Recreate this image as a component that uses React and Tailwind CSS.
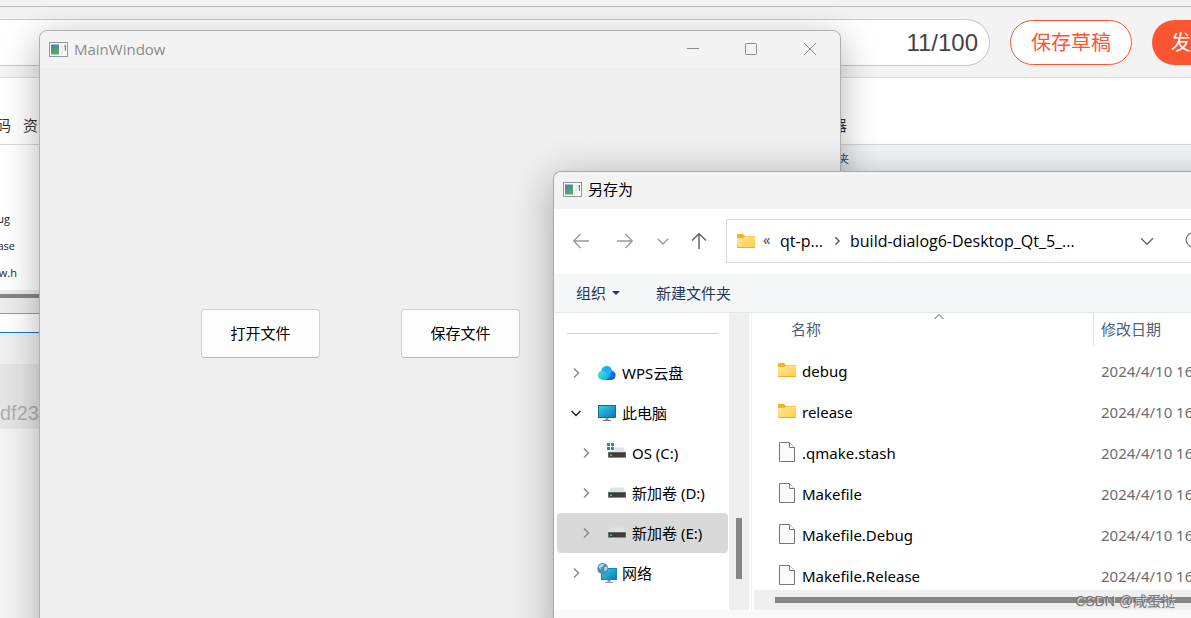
import React from "react";

const uiFont = "font-['Open_Sans','Noto_Sans_CJK_SC',sans-serif]";
const listFont = "font-['Noto_Sans','Noto_Sans_CJK_SC',sans-serif]";

function AppIcon() {
  return (
    <svg width="20" height="16" viewBox="0 0 20 16" aria-hidden="true">
      <defs>
        <linearGradient id="appPane" x1="0" y1="0" x2="0.4" y2="1">
          <stop offset="0" stopColor="#4a7fa5" />
          <stop offset="1" stopColor="#5aa86c" />
        </linearGradient>
      </defs>
      <rect x="0.5" y="0.5" width="18" height="14" fill="#fafafa" stroke="#92979e" />
      <rect x="2" y="2.500" width="8" height="10" fill="url(#appPane)" />
      <rect x="11.500" y="3" width="3" height="9" fill="#ededed" />
      <path d="M15.500 3h1.500v6h-1z" fill="url(#appPane)" />
    </svg>
  );
}

function Folder() {
  return (
    <svg width="18" height="16" viewBox="0 0 18 16" aria-hidden="true" className="shrink-0">
      <defs>
        <linearGradient id="folderFace" x1="0" y1="0" x2="1" y2="1">
          <stop offset="0" stopColor="#ffe8a4" />
          <stop offset="1" stopColor="#ffcb3d" />
        </linearGradient>
      </defs>
      <path d="M0 1.500Q0 1 .5 1H6l2 2h10v4H0z" fill="#f8b31c" />
      <path d="M0 5h6.500l1.500-1.500H18V15H0z" fill="url(#folderFace)" />
      <path d="M0 14.500h18" stroke="#efae25" />
    </svg>
  );
}

function FileIcon() {
  return (
    <svg width="18" height="20" viewBox="0 0 18 20" aria-hidden="true" className="shrink-0">
      <path d="M1.500.5H11.500L16.500 5.500V19.500H1.500z" fill="#fafafa" stroke="#767676" />
      <path d="M11.500.5V5.500H16.500" fill="#fff" stroke="#767676" />
    </svg>
  );
}

function Chevron({ dir, color, size = 12, width = 1.5 }) {
  const paths = {
    right: "M4 1.500L8.500 6L4 10.500",
    down: "M1.500 4L6 8.500L10.500 4",
    up: "M1.500 8L6 3.500L10.500 8",
  };
  return (
    <svg width={size} height={size} viewBox="0 0 12 12" fill="none" stroke={color} strokeWidth={width} aria-hidden="true" className="shrink-0">
      <path d={paths[dir]} />
    </svg>
  );
}

function Cloud() {
  return (
    <svg width="20" height="20" viewBox="0 0 20 20" aria-hidden="true">
      <defs>
        <linearGradient id="cloudBack" x1="0" y1="0" x2="1" y2="1">
          <stop offset="0" stopColor="#1fb8ff" />
          <stop offset="1" stopColor="#0a4fd8" />
        </linearGradient>
        <linearGradient id="cloudFront" x1="0" y1="0" x2="1" y2="0.6">
          <stop offset="0" stopColor="#4be8b8" />
          <stop offset="1" stopColor="#12b6f4" />
        </linearGradient>
      </defs>
      <path d="M4.500 8a5.200 5.200 0 0 1 10.300-.6A4.900 4.900 0 0 1 14.500 17H6z" fill="url(#cloudBack)" />
      <path d="M5.500 17A4.800 4.800 0 1 1 9 8.800L13 13 9 17z" fill="url(#cloudFront)" />
      <path d="M4.600 7.600A5.200 5.200 0 0 1 14.800 7.400L13 12.500 9 8.800Q7 7 4.600 7.600z" fill="#20aefb" />
    </svg>
  );
}

function Monitor() {
  return (
    <svg width="20" height="20" viewBox="0 0 20 20" aria-hidden="true">
      <defs>
        <linearGradient id="screen" x1="0" y1="0" x2="1" y2="1">
          <stop offset="0" stopColor="#36d6e6" />
          <stop offset="1" stopColor="#0a72bd" />
        </linearGradient>
      </defs>
      <rect x="1.500" y="2.500" width="17" height="12" fill="url(#screen)" stroke="#176a8c" />
      <path d="M8.500 15h3v2h-3z" fill="#8c979e" />
      <path d="M6 17.500h8" stroke="#6c767d" />
    </svg>
  );
}

function Drive({ system }) {
  return (
    <svg width="20" height="20" viewBox="0 0 20 20" aria-hidden="true">
      <path d="M4 4.500h12L19 9.500H1z" fill="#dfe1e4" />
      <rect x="1" y="9" width="18" height="6" fill="#8d8d8d" />
      <rect x="1.500" y="9.500" width="17" height="4.500" fill="#3c3c3c" />
      <rect x="3" y="11.500" width="2" height="1.500" fill="#27e03f" />
      {system && (
        <g>
          <path d="M0 0h8v7.500H0z" fill="#fff" />
          <path d="M0 0h3v3H0zM4 0h3v3H4zM0 4h3v3H0zM4 4h3v3H4z" fill="#168bd8" />
        </g>
      )}
    </svg>
  );
}

function Network() {
  return (
    <svg width="20" height="20" viewBox="0 0 20 20" aria-hidden="true">
      <rect x="4.500" y="5.500" width="15" height="11" fill="url(#screen)" stroke="#1788b4" />
      <path d="M10.500 17h3v2h-3z" fill="#8c979e" />
      <path d="M8 19.500h8" stroke="#98a1a7" />
      <circle cx="5.800" cy="5.500" r="5.500" fill="#4d8fb5" />
      <path d="M1.500 4Q3 .5 7 1L6 3.500 3.500 4.500 4 7zM7.500 4l3-.5-.5 3-2.500 2z" fill="#b3dcea" />
    </svg>
  );
}

const tree = [
  { label: "WPS云盘", icon: <Cloud />, depth: 0 },
  { label: "此电脑", icon: <Monitor />, depth: 0, open: true },
  { label: "OS (C:)", icon: <Drive system />, depth: 1 },
  { label: "新加卷 (D:)", icon: <Drive />, depth: 1 },
  { label: "新加卷 (E:)", icon: <Drive />, depth: 1, selected: true },
  { label: "网络", icon: <Network />, depth: 0 },
];

const files = [
  { name: "debug", folder: true },
  { name: "release", folder: true },
  { name: ".qmake.stash" },
  { name: "Makefile" },
  { name: "Makefile.Debug" },
  { name: "Makefile.Release" },
];

function EditorPage() {
  return (
    <div className="flex h-full flex-col whitespace-nowrap">
      <div className="h-[7px] shrink-0 border-b border-[#b8b8b8]" />
      <header className="flex h-[71px] shrink-0 items-start border-b border-[#dcdcdc] pt-3">
        <label className="flex h-[47px] w-[990px] shrink-0 items-center rounded-r-full border border-l-0 border-[#c8c8c8] bg-white pr-[11px]">
          <input aria-label="标题" className="h-full min-w-0 flex-1 bg-transparent outline-none" />
          <span className="font-['Liberation_Sans',sans-serif] text-2xl text-[#444444]">11/100</span>
        </label>
        <button className="ml-5 mt-px h-[45px] w-[122px] shrink-0 rounded-full border border-[#fc5531] bg-white text-xl text-[#fc5531]">保存草稿</button>
        <button className="ml-5 mt-px h-[45px] w-32 shrink-0 rounded-full bg-[#fc5531] pl-[19px] text-left text-xl text-white">发布文章</button>
      </header>
      <nav className="flex h-[67px] shrink-0 items-end border-b border-[#d8d8d8] bg-white pb-2 text-[15px] text-[#333333]">
        <span className="flex w-[11px] shrink-0 justify-end overflow-hidden">代码</span>
        <span className="ml-3 w-[817px] shrink-0">资源</span>
        <span className="-ml-2">器</span>
      </nav>
      <div className="flex min-h-0 flex-1">
        <aside className="flex w-[600px] shrink-0 flex-col text-[11px] text-[#222222]">
          <div className="h-[145px] shrink-0 bg-white pt-[60px] leading-[27px]">
            <div className="flex w-[10px] justify-end">debug</div>
            <div className="flex w-[15px] justify-end">release</div>
            <div className="flex w-[17px] justify-end">mainwindow.h</div>
          </div>
          <div className="flex h-[23px] shrink-0 items-start bg-[#ececec] pt-1">
            <div className="h-1 w-full bg-[#858585]" />
          </div>
          <div className="h-5 shrink-0 border-b border-t border-b-[#1278cc] border-t-[#68a8d8] bg-white" />
          <div className="h-[31px] shrink-0 bg-[#efefef]" />
          <div className="flex h-[65px] shrink-0 items-end bg-[#e5e5e5] pb-[2px] font-['Liberation_Sans',sans-serif] text-xl text-[#b3adad]">df23c</div>
        </aside>
        <div className="flex-1 bg-[#f2f4f6] pt-[6px]">
          <div className="flex w-[249px] justify-end text-[11px] text-[#314e78]">新建文件夹</div>
        </div>
      </div>
    </div>
  );
}

function MainWindow() {
  return (
    <section className="absolute left-[39px] top-[30px] h-[640px] w-[802px] rounded-lg border border-[#b0b0b0] bg-[#efefef] shadow-[0_8px_36px_rgba(0,0,0,0.3)]">
      <header className="flex h-[37px] items-center rounded-t-lg bg-[#f3f3f3] pl-[9px] text-[#8b8b8b]">
        <AppIcon />
        <h1 className="ml-[5px] text-[15px]">MainWindow</h1>
        <div className="ml-auto flex h-full pb-px">
          <button aria-label="最小化" className="flex w-[58px] items-center justify-center">
            <svg width="14" height="14" fill="none" stroke="currentColor"><path d="M1 6.500h12" /></svg>
          </button>
          <button aria-label="最大化" className="flex w-[58px] items-center justify-center">
            <svg width="14" height="14" fill="none" stroke="currentColor"><rect x="1.500" y="1.500" width="11" height="11" rx="1" /></svg>
          </button>
          <button aria-label="关闭" className="flex w-[60px] items-center justify-center">
            <svg width="14" height="14" fill="none" stroke="currentColor"><path d="M1 1l12 12M13 1L1 13" /></svg>
          </button>
        </div>
      </header>
      <div className="flex gap-[81px] pl-[161px] pt-[241px] text-[15px] text-black">
        <button className="h-[49px] w-[119px] rounded border border-[#d0d0d0] border-b-[#b8b8b8] bg-[#fdfdfd]">打开文件</button>
        <button className="h-[49px] w-[119px] rounded border border-[#d0d0d0] border-b-[#b8b8b8] bg-[#fdfdfd]">保存文件</button>
      </div>
    </section>
  );
}

function NavButton({ label, color, children }) {
  return (
    <button aria-label={label} className="shrink-0">
      <svg width="18" height="18" viewBox="0 0 18 18" fill="none" stroke={color} strokeWidth="1.400">{children}</svg>
    </button>
  );
}

function SaveDialog() {
  return (
    <section className="absolute -right-16 left-[553px] top-[171px] flex h-[480px] flex-col overflow-visible whitespace-nowrap rounded-tl-lg border-l border-t border-[#a8a8a8] bg-white text-[15px] text-black shadow-[0_8px_42px_rgba(0,0,0,0.32)]">
      <header className="flex h-[37px] shrink-0 items-center rounded-tl-lg bg-[#f3f3f3] pb-[2px] pl-[9px]">
        <AppIcon />
        <h2 className="ml-[5px]">另存为</h2>
      </header>
      <div className="flex h-[65px] shrink-0 items-center pb-[2px] pl-[18px]">
        <NavButton label="后退" color="#9a9a9a"><path d="M17 9H2M8.500 2L1.700 9l6.800 7" /></NavButton>
        <div className="ml-[26px] flex"><NavButton label="前进" color="#9a9a9a"><path d="M1 9h15M9.500 2l6.800 7-6.800 7" /></NavButton></div>
        <button aria-label="最近位置" className="ml-[22px]"><Chevron dir="down" color="#9a9a9a" size={14} width={1.2} /></button>
        <div className="ml-5 flex"><NavButton label="向上" color="#606060"><path d="M9 17V2M2 8.500l7-6.800 7 6.800" /></NavButton></div>
        <div className="ml-[18px] flex h-11 flex-1 items-center border border-[#d9d9d9] pl-[10px] text-base">
          <Folder />
          <span className="ml-2 w-[17px] pb-[2px] text-[15px] text-[#444444]">«</span>
          <span className="w-[52px]">qt-p...</span>
          <Chevron dir="right" color="#555555" size={10} width={1.6} />
          <span className="ml-2 w-[289px]">build-dialog6-Desktop_Qt_5_...</span>
          <button aria-label="展开地址"><Chevron dir="down" color="#666666" size={16} width={1} /></button>
          <button aria-label="刷新" className="ml-[29px]">
            <svg width="18" height="18" viewBox="0 0 18 18" fill="none" stroke="#777777" strokeWidth="1.300"><path d="M15 4A7 7 0 1 0 16 9M15 1v4h-4" /></svg>
          </button>
        </div>
      </div>
      <div className="flex h-[39px] shrink-0 items-center border-b border-[#e3e6ea] bg-[#f4f6f8] pl-[22px] text-[#1e395b]">
        <button className="flex items-center gap-[5px]">
          组织
          <svg width="10" height="6" aria-hidden="true"><path d="M1 1h8L5 5z" fill="#1e395b" /></svg>
        </button>
        <button className="ml-[35px]">新建文件夹</button>
      </div>
      <div className={`flex h-[297px] shrink-0 ${listFont}`}>
        <nav aria-label="导航窗格" className="w-[175px] shrink-0 pr-px">
          <div className="mb-[19px] ml-[13px] mr-[10px] mt-5 border-t border-[#d0d0d0]" />
          <ul>
            {tree.map((n) => (
              <li key={n.label} className="pl-[3px]">
                <a
                  href="#"
                  className={`flex h-10 items-center rounded-sm ${n.depth ? "pl-[23px]" : "pl-[13px]"} ${n.selected ? "bg-[#d9d9d9]" : ""}`}
                >
                  <Chevron dir={n.open ? "down" : "right"} color={n.open ? "#222222" : "#8a8a8a"} />
                  <span className="ml-[15px]">{n.icon}</span>
                  <span className="ml-[5px]">{n.label}</span>
                </a>
              </li>
            ))}
          </ul>
        </nav>
        <div className="flex w-5 shrink-0 flex-col items-center bg-[#efefef] pt-[205px]">
          <div className="h-[61px] w-[6px] bg-[#858585]" />
        </div>
        <div className="ml-[2px] flex min-w-0 flex-1 flex-col border-l border-[#f2f2f2]">
          <table className="w-full table-fixed text-left">
            <thead>
              <tr className="h-[38px] text-[#4c607a]">
                <th className="w-[342px] p-0 align-top font-normal">
                  <div className="relative flex h-[33px] items-center border-r border-[#e0e0e0] pl-[39px]">
                    名称
                    <span className="absolute left-[181px] top-[-2px]"><Chevron dir="up" color="#555555" width={1} /></span>
                  </div>
                </th>
                <th className="p-0 align-top font-normal">
                  <div className="flex h-[33px] items-center pl-[7px]">修改日期</div>
                </th>
              </tr>
            </thead>
            <tbody>
              {files.map((f) => (
                <tr key={f.name} className="h-[41px]">
                  <td className="p-0">
                    <div className="flex items-center gap-[6px] pl-[26px]">
                      <span className="shrink-0 pb-[3px]">{f.folder ? <Folder /> : <FileIcon />}</span>
                      {f.name}
                    </div>
                  </td>
                  <td className="p-0 pl-[7px] text-[#6d6d6d]">2024/4/10 16:20</td>
                </tr>
              ))}
            </tbody>
          </table>
        </div>
      </div>
      <div className="absolute left-[200px] right-0 top-[418px] flex h-5 items-center bg-[#efefef] pl-[21px]">
        <div className="h-[6px] flex-1 bg-[#858585]" />
      </div>
      <footer className="flex-1 bg-[#f9f9f9]" />
    </section>
  );
}

export default function App() {
  return (
    <main className={`relative h-screen overflow-hidden bg-[#f3f3f3] ${uiFont}`}>
      <EditorPage />
      <MainWindow />
      <SaveDialog />
      <p className="absolute bottom-[7px] right-4 whitespace-nowrap font-['Liberation_Sans','Noto_Sans_CJK_SC',sans-serif] text-sm text-[#777777] [text-shadow:1px_1px_0_#e0e0e0]">CSDN @咸蛋挞</p>
    </main>
  );
}
